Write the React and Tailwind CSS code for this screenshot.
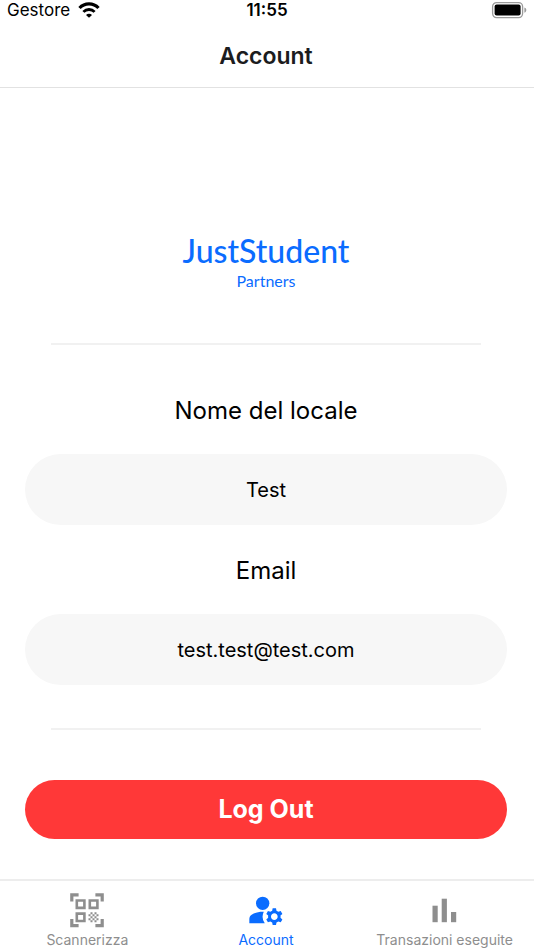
import React, { useState } from 'react';
import { MdManageAccounts } from 'react-icons/md';

const WifiIcon = () => (
  <svg viewBox="0 0 22 16" className="w-[22px] h-4" fill="none" stroke="#000" aria-hidden="true">
    <path d="M1.5 6A13 13 0 0 1 20.5 6" strokeWidth="3.2" />
    <path d="M5.4 9.9A7.7 7.7 0 0 1 16.6 9.9" strokeWidth="2.8" />
    <path d="M11 15.8L8 12.9A4.2 4.2 0 0 1 14 12.9Z" fill="#000" stroke="none" />
  </svg>
);

const BatteryIcon = () => (
  <svg viewBox="0 0 36 18" className="w-9 h-[18px]" aria-hidden="true">
    <rect x="1.6" y="1.6" width="30" height="15" rx="4" fill="#fff" stroke="#9b9b9b" strokeWidth="1.3" />
    <rect x="3.6" y="3.6" width="26" height="11" rx="2" fill="#000" />
    <path d="M33.4 6.5c1.4.5 1.9 1.4 1.9 2.6s-.5 2.1-1.9 2.6z" fill="#9b9b9b" />
  </svg>
);

const ScanIcon = ({ className }) => (
  <svg viewBox="0 0 40 40" className={className} fill="none" stroke="currentColor" aria-hidden="true">
    <path
      d="M4.8 11.5V4.9h6.8M28.4 4.9h6.8v6.6M35.2 29v6.6h-6.8M11.6 35.6H4.8V29"
      strokeWidth="3.2"
    />
    <path d="M9.8 10.5h7.6v7.4H9.8zM22.8 10.5h7.6v7.4h-7.6zM9.8 23.6h7.6V31H9.8z" strokeWidth="2.6" />
    <path
      d="M23.5 22.3h2v2h-2zm4 0h2v2h-2zm-6 2h2v2h-2zm4 0h2v2h-2zm4 0h2v2h-2zm-6 2h2v2h-2zm4 0h2v2h-2zm-6 2h2v2h-2zm4 0h2v2h-2zm4 0h2v2h-2zm-6 2h2v2h-2zm4 0h2v2h-2z"
      fill="currentColor"
      stroke="none"
    />
  </svg>
);

const BarsIcon = ({ className }) => (
  <svg viewBox="0 0 40 40" className={className} fill="currentColor" aria-hidden="true">
    <rect x="7.5" y="15.7" width="5.2" height="16.5" />
    <rect x="16.7" y="8.7" width="5.2" height="23.5" />
    <rect x="26" y="22" width="5.2" height="10.2" />
  </svg>
);

const tabs = [
  { id: 'scan', label: 'Scannerizza', icon: ScanIcon },
  { id: 'account', label: 'Account', icon: MdManageAccounts },
  { id: 'transactions', label: 'Transazioni eseguite', icon: BarsIcon },
];

const StatusBar = () => (
  <div className="grid grid-cols-3 items-center h-5 px-[7px] text-[17px] leading-5 text-black">
    <div className="flex items-center gap-2">
      <span>Gestore</span>
      <WifiIcon />
    </div>
    <span className="text-center font-semibold">11:55</span>
    <div className="flex justify-end">
      <BatteryIcon />
    </div>
  </div>
);

const Field = ({ id, label, type, value }) => (
  <div className="flex flex-col">
    <label htmlFor={id} className="text-center text-2xl text-black">
      {label}
    </label>
    <input
      id={id}
      type={type}
      value={value}
      readOnly
      className="mt-[27px] h-[71px] w-full rounded-full bg-[#f7f7f7] text-center text-xl text-black outline-none"
    />
  </div>
);

const App = () => {
  const [activeTab, setActiveTab] = useState('account');

  return (
    <div className="flex min-h-screen flex-col overflow-x-hidden bg-white font-['Inter',sans-serif]">
      <StatusBar />

      <header className="flex h-[68px] items-center justify-center border-b border-[#e2e2e2] pt-1.5 pr-0.5">
        <h1 className="text-[23px] font-semibold text-[#1c1c1e]">Account</h1>
      </header>

      <main className="flex flex-1 flex-col pl-[25px] pr-[27px]">
        {/* Logo */}
        <div className="mt-[143px] flex flex-col items-center font-['Lato',sans-serif] text-[#0a6cff]">
          <span className="text-[32px] font-medium leading-10">JustStudent</span>
          <span className="text-base leading-5">Partners</span>
        </div>

        <hr className="mx-[26px] mt-[52px] border-t-2 border-[#f1f1f1]" />

        <div className="mt-[50px] flex flex-col gap-[30px]">
          <Field id="name" label="Nome del locale" type="text" value="Test" />
          <Field id="email" label="Email" type="email" value="test.test@test.com" />
        </div>

        <hr className="mx-[26px] mt-[43px] border-t-2 border-[#f1f1f1]" />

        <button
          type="button"
          className="mt-[50px] mb-10 h-[59px] w-full rounded-full bg-[#ff3838] text-[25px] font-bold text-white"
        >
          Log Out
        </button>
      </main>

      {/* Tab bar */}
      <nav className="-ml-0.5 grid grid-cols-3 border-t-2 border-[#ededed] pt-[9px]">
        {tabs.map(({ id, label, icon: Icon }) => (
          <button
            key={id}
            type="button"
            onClick={() => setActiveTab(id)}
            className={`flex flex-col items-center whitespace-nowrap text-sm ${
              activeTab === id ? 'text-[#0a6cff]' : 'text-[#8e8e8e]'
            }`}
          >
            <Icon className="size-10" />
            <span className="leading-5">{label}</span>
          </button>
        ))}
      </nav>
    </div>
  );
};

export default App;
